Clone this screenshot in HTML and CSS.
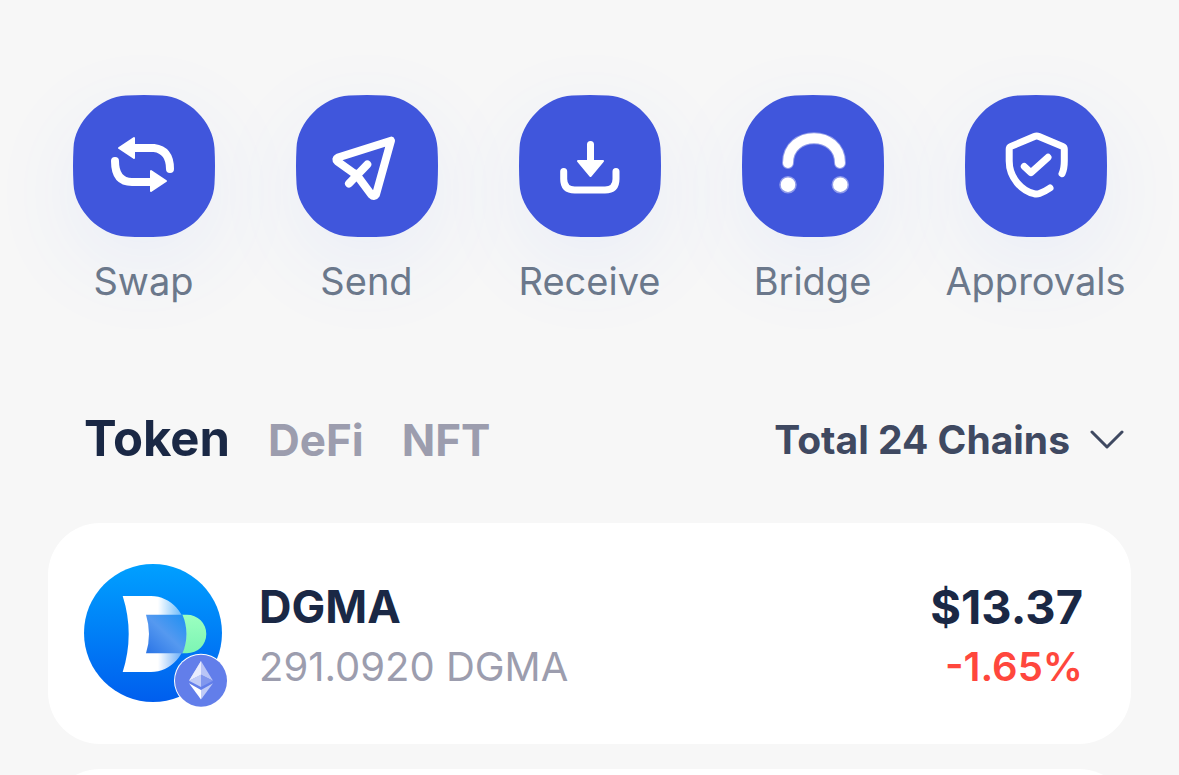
FILE: index.html
```html
<!DOCTYPE html>
<html lang="en">
<head>
<meta charset="utf-8">
<meta name="viewport" content="width=device-width, initial-scale=1">
<title>Wallet</title>
<link rel="stylesheet" href="styles.css">
</head>
<body>
<main class="wallet">
  <nav class="actions" aria-label="Wallet actions">
    <button class="action" type="button">
      <span class="tile"><svg viewBox="0 0 142 142" aria-hidden="true">
        <path class="shape" d="M53 .5Q71-.5 89 .5C115 1.500 140.500 27 141.500 53Q142.500 71 141.500 89C140.500 115 115 140.500 89 141.500Q71 142.500 53 141.500C27 140.500 1.500 115 .5 89Q-.5 71 .5 53C1.500 27 27 1.500 53 .5Z"/>
        <path class="line w8" d="M60 53H81Q97 55 97 74M42 66Q42 87 59 87H79"/>
        <path class="solid" d="M46 53 61 43V63ZM93 86 78 76V96Z"/>
      </svg></span>
      <span class="label">Swap</span>
    </button>
    <button class="action" type="button">
      <span class="tile"><svg viewBox="0 0 142 142" aria-hidden="true">
        <path class="shape" d="M53 .5Q71-.5 89 .5C115 1.500 140.500 27 141.500 53Q142.500 71 141.500 89C140.500 115 115 140.500 89 141.500Q71 142.500 53 141.500C27 140.500 1.500 115 .5 89Q-.5 71 .5 53C1.500 27 27 1.500 53 .5Z"/>
        <path class="line w8" d="M59.700 79.500 41.500 66.500Q39 64 42 62.500L95 45.700 80 99.500Q78 102.500 75.500 99.800L60 79M53 88.500 71.300 69.500"/>
      </svg></span>
      <span class="label">Send</span>
    </button>
    <button class="action" type="button">
      <span class="tile"><svg viewBox="0 0 142 142" aria-hidden="true">
        <path class="shape" d="M53 .5Q71-.5 89 .5C115 1.500 140.500 27 141.500 53Q142.500 71 141.500 89C140.500 115 115 140.500 89 141.500Q71 142.500 53 141.500C27 140.500 1.500 115 .5 89Q-.5 71 .5 53C1.500 27 27 1.500 53 .5Z"/>
        <path class="line w7" d="M71.500 49.500V68M44.700 76.500V84Q44.700 95 55.700 95H86Q97 95 97 84V76.500"/>
        <path class="solid" d="M59 66H84L71.500 81Z"/>
      </svg></span>
      <span class="label">Receive</span>
    </button>
    <button class="action" type="button">
      <span class="tile"><svg viewBox="0 0 142 142" aria-hidden="true">
        <path class="shape" d="M53 .5Q71-.5 89 .5C115 1.500 140.500 27 141.500 53Q142.500 71 141.500 89C140.500 115 115 140.500 89 141.500Q71 142.500 53 141.500C27 140.500 1.500 115 .5 89Q-.5 71 .5 53C1.500 27 27 1.500 53 .5Z"/>
        <g class="halo"><path d="M46 68C46 35 98 35 98 68"/><path d="M46 89.700h.01M98.300 89.700h.01" stroke-width="17.500"/></g>
        <path class="line w9" d="M46 68C46 35 98 35 98 68"/>
        <path class="line" stroke-width="14.500" d="M46 89.700h.01M98.300 89.700h.01"/>
      </svg></span>
      <span class="label">Bridge</span>
    </button>
    <button class="action" type="button">
      <span class="tile"><svg viewBox="0 0 142 142" aria-hidden="true">
        <path class="shape" d="M53 .5Q71-.5 89 .5C115 1.500 140.500 27 141.500 53Q142.500 71 141.500 89C140.500 115 115 140.500 89 141.500Q71 142.500 53 141.500C27 140.500 1.500 115 .5 89Q-.5 71 .5 53C1.500 27 27 1.500 53 .5Z"/>
        <path class="line w7" d="M97 78.700Q99.300 74 99.300 66V54Q99.300 52.200 97.500 51.400L74 41.500Q71.700 40.500 69.400 41.500L46 51.400Q44.200 52.200 44.200 54V66C44.200 83 57 96 69 98.700Q71.700 99.500 74.500 98.500Q80 96.500 85 93M59.300 71.500 66 77.700 83 62.300"/>
      </svg></span>
      <span class="label">Approvals</span>
    </button>
  </nav>

  <section class="assets">
    <header class="bar">
      <div class="tabs" role="tablist">
        <button class="tab active" type="button" role="tab" aria-selected="true">Token</button>
        <button class="tab" type="button" role="tab" aria-selected="false">DeFi</button>
        <button class="tab" type="button" role="tab" aria-selected="false">NFT</button>
      </div>
      <button class="chains" type="button">
        <span>Total 24 Chains</span>
        <svg class="chevron" viewBox="0 0 34 20" aria-hidden="true"><path d="M2 2 17 17 32 2"/></svg>
      </button>
    </header>

    <ul class="list">
      <li class="card">
        <svg class="coin" viewBox="0 0 144 144" role="img" aria-label="DGMA on Ethereum">
          <defs>
            <linearGradient id="disc" x1="0" y1="0" x2="0" y2="1"><stop offset="0" stop-color="#00a0ff"/><stop offset="1" stop-color="#005eee"/></linearGradient>
            <linearGradient id="dee" x1="0" y1="0" x2="1" y2="0"><stop offset=".55" stop-color="#fff"/><stop offset="1" stop-color="#fff" stop-opacity=".3"/></linearGradient>
            <linearGradient id="core" x1="0" y1="1" x2="1" y2="0"><stop offset="0" stop-color="#2a74e6"/><stop offset=".5" stop-color="#5599f0"/><stop offset="1" stop-color="#1c90f3"/></linearGradient>
            <linearGradient id="mint" x1="0" y1="0" x2="0" y2="1"><stop offset="0" stop-color="#9bffc0"/><stop offset="1" stop-color="#7cf5b4"/></linearGradient>
          </defs>
          <circle cx="69" cy="69" r="69" fill="url(#disc)"/>
          <path fill="url(#mint)" d="M98 50.700H103A19.300 19.300 0 0 1 103 89.300H98Z"/>
          <path fill="url(#dee)" d="M38.700 32H67C87 32 102.700 50 102.700 70S87 108 67 108H38.700Q50.700 70 38.700 32Z"/>
          <path fill="url(#core)" d="M62 50.700H98.500Q106.500 70 98.500 89.300H62Q68 70 62 50.700Z"/>
          <circle cx="117" cy="116.700" r="27" fill="#fff"/>
          <circle cx="117" cy="116.700" r="26" fill="#627eea"/>
          <path fill="#c0cbf7" d="M117 97V110.300L105 116.700Z"/>
          <path fill="#e9ecfd" d="M117 97 105 116.700 117 111Z"/>
          <path fill="#b9c5f6" d="M117 97 129 116.700 117 111Z"/>
          <path fill="#c0cbf7" d="M117 110.500 105 116.700 117 123Z"/>
          <path fill="#8197ee" d="M117 110.500 129 116.700 117 123Z"/>
          <path fill="#fff" d="M105 119.300 117 126V135.500Z"/>
          <path fill="#c0cbf7" d="M129 119.300 117 126V135.500Z"/>
        </svg>
        <div class="cell">
          <strong class="main">DGMA</strong>
          <span class="sub">291.0920 DGMA</span>
        </div>
        <div class="cell end">
          <strong class="main price">$13.37</strong>
          <span class="sub down">-1.65%</span>
        </div>
      </li>
      <li class="card"></li>
    </ul>
  </section>
</main>
</body>
</html>
```
FILE: styles.css
```css
* { box-sizing: border-box; }
html { height: 100%; overflow: hidden; }
body {
  height: 100%;
  margin: 0;
  overflow: hidden;
  background: #f7f7f7;
  color: #1a2845;
  font-family: Inter, "Liberation Sans", sans-serif;
}
button {
  padding: 0;
  border: 0;
  background: none;
  color: inherit;
  font: inherit;
  cursor: pointer;
}
.wallet { padding-top: 95px; }

.actions {
  display: grid;
  grid-template-columns: repeat(5, 1fr);
  padding: 0 32px;
}
.action {
  display: flex;
  flex-direction: column;
  align-items: center;
  gap: 20px;
}
.tile {
  width: 142px;
  height: 142px;
  border-radius: 60px;
  box-shadow: 0 26px 92px rgba(64, 110, 255, 0.08);
}
.tile svg { display: block; width: 100%; }
.shape { fill: #4056dc; }
.solid {
  fill: #fff;
  stroke: #fff;
  stroke-width: 2;
  stroke-linejoin: round;
}
.line, .halo {
  fill: none;
  stroke: #fff;
  stroke-linecap: round;
  stroke-linejoin: round;
}
.halo { stroke: #8f9bea; stroke-width: 12; }
.w7 { stroke-width: 7; }
.w8 { stroke-width: 8; }
.w9 { stroke-width: 10; }
.label {
  position: relative;
  color: #6b788b;
  font-size: 38px;
  line-height: 48px;
}

.bar {
  display: flex;
  align-items: center;
  justify-content: space-between;
  margin-top: 104px;
  padding: 0 55px 0 84px;
}
.tabs { display: flex; align-items: baseline; gap: 38px; }
.tab {
  color: #9c9dae;
  font-size: 44px;
  font-weight: 700;
  line-height: 60px;
}
.tab.active { color: #1a2845; font-size: 49px; }
.chains {
  display: flex;
  align-items: center;
  gap: 20px;
  color: #3f4961;
  font-size: 39px;
  font-weight: 700;
  line-height: 60px;
}
.chevron { width: 34px; }
.chevron path {
  fill: none;
  stroke: #3f4961;
  stroke-width: 3;
  stroke-linecap: round;
  stroke-linejoin: round;
}

.list {
  display: grid;
  gap: 25px;
  margin: 53px 48px 0;
  padding: 0;
  list-style: none;
}
.card {
  display: flex;
  align-items: center;
  gap: 31px;
  min-height: 221px;
  padding: 5px 48px 0 36px;
  border-radius: 52px;
  background: #fff;
}
.coin { flex: none; width: 144px; }
.cell { display: grid; gap: 6px; }
.end { margin-left: auto; text-align: right; }
.main { font-size: 45px; font-weight: 700; line-height: 56px; }
.price { font-size: 47px; }
.sub { color: #9c9dae; font-size: 40px; line-height: 52px; }
.down { color: #ff473d; font-weight: 600; }
```
